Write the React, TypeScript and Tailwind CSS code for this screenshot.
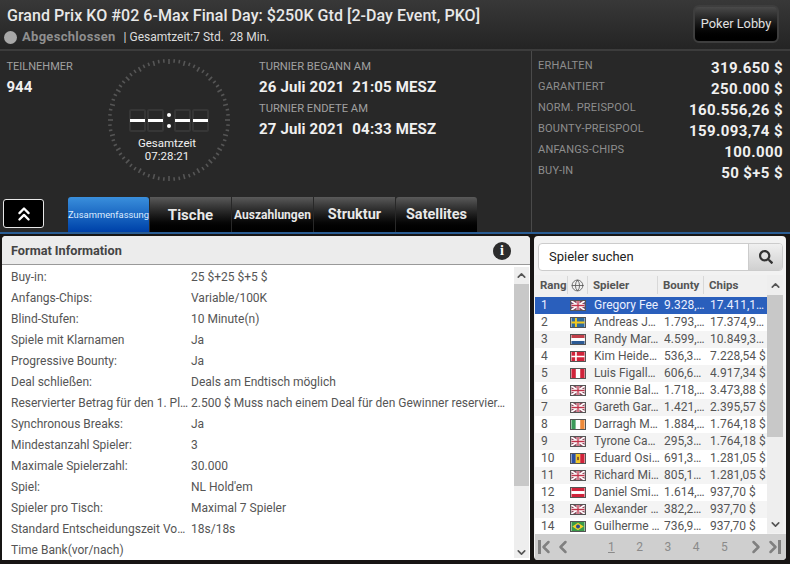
import { ChevronUp, ChevronDown, ChevronLeft, ChevronRight, ChevronsUp, Globe } from 'lucide-react';
import { FaSearch } from 'react-icons/fa';

const formatRows = [
  ['Buy-in:', '25 $+25 $+5 $'],
  ['Anfangs-Chips:', 'Variable/100K'],
  ['Blind-Stufen:', '10 Minute(n)'],
  ['Spiele mit Klarnamen', 'Ja'],
  ['Progressive Bounty:', 'Ja'],
  ['Deal schließen:', 'Deals am Endtisch möglich'],
  ['Reservierter Betrag für den 1. Pl…', '2.500 $ Muss nach einem Deal für den Gewinner reservier…'],
  ['Synchronous Breaks:', 'Ja'],
  ['Mindestanzahl Spieler:', '3'],
  ['Maximale Spielerzahl:', '30.000'],
  ['Spiel:', "NL Hold'em"],
  ['Spieler pro Tisch:', 'Maximal 7 Spieler'],
  ['Standard Entscheidungszeit Vo…', '18s/18s'],
  ['Time Bank(vor/nach)', ''],
];

const players = [
  ['1', 'uk', 'Gregory Fee', '9.328,…', '17.411,1…'],
  ['2', 'se', 'Andreas J…', '1.793,…', '17.374,9…'],
  ['3', 'nl', 'Randy Mar…', '4.599,…', '10.849,3…'],
  ['4', 'dk', 'Kim Heide…', '536,3…', '7.228,54 $'],
  ['5', 'pe', 'Luis Figall…', '606,6…', '4.917,34 $'],
  ['6', 'uk', 'Ronnie Bal…', '1.718,…', '3.473,88 $'],
  ['7', 'uk', 'Gareth Gar…', '1.421,…', '2.395,57 $'],
  ['8', 'ie', 'Darragh M…', '1.884,…', '1.764,18 $'],
  ['9', 'uk', 'Tyrone Ca…', '295,3…', '1.764,18 $'],
  ['10', 'md', 'Eduard Osi…', '691,3…', '1.281,05 $'],
  ['11', 'uk', 'Richard Mi…', '805,1…', '1.281,05 $'],
  ['12', 'at', 'Daniel Smi…', '1.614,…', '937,70 $'],
  ['13', 'uk', 'Alexander …', '382,2…', '937,70 $'],
  ['14', 'br', 'Guilherme …', '736,9…', '937,70 $'],
];

const prizes = [
  ['ERHALTEN', '319.650 $'],
  ['GARANTIERT', '250.000 $'],
  ['NORM. PREISPOOL', '160.556,26 $'],
  ['BOUNTY-PREISPOOL', '159.093,74 $'],
  ['ANFANGS-CHIPS', '100.000'],
  ['BUY-IN', '50 $+5 $'],
];

function Flag({ code }: { code: string }) {
  return (
    <svg width="16" height="11" viewBox="0 0 16 11" className="block border border-[#555]">
      {code === 'uk' && (
        <>
          <rect width="16" height="11" fill="#8a4a5c" />
          <path d="M0 0L16 11M16 0L0 11" stroke="#fff" strokeWidth="2" />
          <path d="M8 0V11M0 5.5H16" stroke="#fff" strokeWidth="3.4" />
          <path d="M8 0V11M0 5.5H16" stroke="#c0324a" strokeWidth="1.6" />
        </>
      )}
      {code === 'se' && (
        <>
          <rect width="16" height="11" fill="#2f6a9c" />
          <path d="M5.5 0V11M0 5.5H16" stroke="#f2c81e" strokeWidth="2.4" />
        </>
      )}
      {code === 'nl' && (
        <>
          <rect width="16" height="4" fill="#c2404a" />
          <rect y="3.7" width="16" height="3.6" fill="#fff" />
          <rect y="7.3" width="16" height="3.7" fill="#2c5a94" />
        </>
      )}
      {code === 'dk' && (
        <>
          <rect width="16" height="11" fill="#d0233a" />
          <path d="M5.5 0V11M0 5.5H16" stroke="#fff" strokeWidth="2" />
        </>
      )}
      {code === 'pe' && (
        <>
          <rect width="16" height="11" fill="#d0233a" />
          <rect x="5.3" width="5.4" height="11" fill="#fff" />
        </>
      )}
      {code === 'ie' && (
        <>
          <rect width="5.3" height="11" fill="#3a9a5a" />
          <rect x="5.3" width="5.4" height="11" fill="#fff" />
          <rect x="10.7" width="5.3" height="11" fill="#ee8a3a" />
        </>
      )}
      {code === 'md' && (
        <>
          <rect width="5.3" height="11" fill="#2c4fa0" />
          <rect x="5.3" width="5.4" height="11" fill="#f0c828" />
          <rect x="10.7" width="5.3" height="11" fill="#d0233a" />
          <rect x="6.8" y="3.5" width="2.4" height="4" fill="#8a5a2a" />
        </>
      )}
      {code === 'at' && (
        <>
          <rect width="16" height="11" fill="#d0233a" />
          <rect y="3.7" width="16" height="3.6" fill="#fff" />
        </>
      )}
      {code === 'br' && (
        <>
          <rect width="16" height="11" fill="#3a9a4a" />
          <path d="M8 1L15 5.5L8 10L1 5.5Z" fill="#f2d228" />
          <circle cx="8" cy="5.5" r="2.4" fill="#2c4a90" />
        </>
      )}
    </svg>
  );
}

function Clock() {
  const ticks = Array.from({ length: 72 }, (_, i) => i * 5);
  const bars = [23, 41, 68, 86];
  return (
    <svg width="124" height="124" viewBox="0 0 124 124" className="block">
      {ticks.map((a) => (
        <rect key={a} x="61.2" y="1" width="1.6" height={a % 15 === 0 ? 5 : 3.5} fill="#565656" transform={`rotate(${a} 62 62)`} />
      ))}
      {bars.map((x) => (
        <g key={x}>
          <rect x={x} y="52" width="15" height="21" rx="1" fill="none" stroke="#363636" strokeWidth="2" />
          <rect x={x} y="61" width="15" height="3" fill="#fff" />
        </g>
      ))}
      <circle cx="62" cy="57" r="2" fill="#fff" />
      <circle cx="62" cy="68" r="2" fill="#fff" />
    </svg>
  );
}

export default function App() {
  return (
    <div className="w-[790px] h-[564px] overflow-hidden bg-[#171514] text-[12px]" style={{ fontFamily: 'Roboto, sans-serif' }}>
      {/* HEADER */}
      <div className="h-[51px] flex justify-between bg-gradient-to-b from-[#383838] to-[#242424] border-b-2 border-[#3c3c3c]">
        <div className="pl-[7px] pt-[5px]">
          <h1 className="text-[16px] leading-[21px] font-medium tracking-[0.05px] text-[#e8e8e8] whitespace-nowrap">
            Grand Prix KO #02 6-Max Final Day: $250K Gtd [2-Day Event, PKO]
          </h1>
          <div className="flex items-center mt-[2px] h-[18px] text-[12px] text-[#dcdcdc] whitespace-nowrap">
            <span className="w-[13px] h-[13px] -ml-[3px] rounded-full bg-[#a8a8a8]" />
            <span className="ml-[5px] text-[13px] font-bold text-[#8f8f8f] tracking-[0.3px]">Abgeschlossen</span>
            <span className="ml-[8px]">| Gesamtzeit:7 Std.&nbsp; 28 Min.</span>
          </div>
        </div>
        <button className="mt-[5px] mr-[11px] w-[86px] h-[38px] rounded-[6px] border-2 border-[#3e3e3e] bg-gradient-to-b from-[#4a4a4a] to-[#000] text-[12.8px] text-[#e0e0e0] pb-[1px]">
          Poker Lobby
        </button>
      </div>

      {/* STATS */}
      <div className="h-[183px] flex bg-[#282828] border-b-2 border-[#2a5d94]">
        <div className="w-[532px] relative border-r border-[#4a4a4a] shrink-0 flex flex-col">
          <div className="flex flex-1">
            <div className="w-[106px] pl-[6.5px] pt-[8px]">
              <div className="text-[11px] text-[#a0a0a0] leading-[16px]">TEILNEHMER</div>
              <div className="mt-[2px] text-[15px] leading-[20px] font-bold text-[#f0f0f0]">944</div>
            </div>
            <div className="w-[153px] relative">
              <div className="pt-[7px] pl-[1px]">
                <Clock />
              </div>
              <div className="absolute left-[0px] top-[86px] w-[122px] text-center text-[11.5px] text-[#f0f0f0] leading-[13px]">
                <div>Gesamtzeit</div>
                <div>07:28:21</div>
              </div>
            </div>
            <div className="pt-[8px] whitespace-nowrap">
              <div className="text-[11.2px] text-[#a0a0a0] leading-[16px]">TURNIER BEGANN AM</div>
              <div className="mt-[2px] text-[15px] leading-[20px] font-bold tracking-[0.15px] text-[#f0f0f0]">26 Juli 2021&nbsp; 21:05 MESZ</div>
              <div className="mt-[4px] text-[11.2px] text-[#a0a0a0] leading-[16px]">TURNIER ENDETE AM</div>
              <div className="mt-[2px] text-[15px] leading-[20px] font-bold tracking-[0.15px] text-[#f0f0f0]">27 Juli 2021&nbsp; 04:33 MESZ</div>
            </div>
          </div>
          <div className="h-[36px] flex items-end shrink-0">
            <button className="ml-[3px] mb-[4px] w-[41px] h-[29px] rounded-[3px] border border-[#e8e8e8] bg-black flex items-center justify-center text-white">
              <ChevronsUp size={22} strokeWidth={2.5} />
            </button>
            <div className="ml-[24px] flex h-[35px] items-stretch gap-px">
              <div className="w-[81px] pt-[1px] rounded-t-[3px] bg-gradient-to-b from-[#3a8fdc] to-[#0040a8] text-[9.4px] text-[#dcecff] flex items-center justify-center whitespace-nowrap">Zusammenfassung</div>
              <div className="w-[81px] pt-[1px] bg-gradient-to-b from-[#5a5a5a] to-black text-[15px] font-bold text-[#e8e8e8] flex items-center justify-center">Tische</div>
              <div className="w-[81px] pt-[1px] bg-gradient-to-b from-[#5a5a5a] to-black text-[12px] font-bold text-[#e8e8e8] flex items-center justify-center">Auszahlungen</div>
              <div className="w-[81px] pt-[1px] bg-gradient-to-b from-[#5a5a5a] to-black text-[14.5px] font-bold text-[#e8e8e8] flex items-center justify-center">Struktur</div>
              <div className="w-[81px] pt-[1px] rounded-t-[3px] bg-gradient-to-b from-[#5a5a5a] to-black text-[14.5px] font-bold text-[#e8e8e8] flex items-center justify-center">Satellites</div>
            </div>
          </div>
        </div>
        <div className="flex-1 pl-[6px] pr-[7px] pt-[5px]">
          {prizes.map(([label, value]) => (
            <div key={label} className="h-[21px] flex justify-between">
              <span className="text-[11px] leading-[20px] text-[#8e8e8e] tracking-[0.2px]">{label}</span>
              <span className="text-[15px] leading-[24px] font-bold text-[#f0f0f0] tracking-[0.4px]">{value}</span>
            </div>
          ))}
        </div>
      </div>

      {/* BOTTOM PANELS */}
      <div className="flex gap-[4px] pl-[2px] pt-[2px]">
        {/* FORMAT */}
        <div className="w-[528px] h-[324px] bg-white rounded-t-[4px] flex flex-col overflow-hidden">
          <div className="h-[29px] pt-[1px] shrink-0 flex items-center justify-between pl-[9px] pr-[19px] bg-[#ececec] border-b border-[#999]">
            <span className="text-[12.7px] font-bold text-[#444]">Format Information</span>
            <span className="w-[18px] h-[18px] rounded-full bg-[#2c2c2c] text-white font-bold text-[14px] leading-[18px] text-center" style={{ fontFamily: 'Liberation Serif, serif' }}>i</span>
          </div>
          <div className="flex flex-1 min-h-0">
            <div className="flex-1 pt-[2px]">
              {formatRows.map(([label, value]) => (
                <div key={label} className="h-[21px] flex text-[#555] leading-[21px] whitespace-nowrap">
                  <span className="w-[189px] pl-[9px] shrink-0">{label}</span>
                  <span>{value}</span>
                </div>
              ))}
            </div>
            <div className="w-[15px] mr-[1px] mt-[2px] mb-[2px] flex flex-col bg-[#eeeeee]">
              <div className="h-[17px] flex items-center justify-center text-[#555]"><ChevronUp size={13} strokeWidth={3} /></div>
              <div className="h-[202px] bg-[#c8c8c8]" />
              <div className="flex-1" />
              <div className="h-[11px] flex items-center justify-center text-[#555]"><ChevronDown size={13} strokeWidth={3} /></div>
            </div>
          </div>
        </div>

        {/* PLAYERS */}
        <div className="w-[252px] h-[324px] bg-[#f2f2f2] rounded-[4px] flex flex-col overflow-hidden">
          <div className="pt-[7px] pl-[4px] pr-[3px] pb-[4px]">
            <div className="h-[28px] flex rounded-[4px] border border-[#ccc] bg-white overflow-hidden">
              <div className="flex-1 pl-[10px] text-[13px] leading-[26px] text-[#222]">Spieler suchen</div>
              <div className="w-[34px] bg-gradient-to-b from-[#f0f0f0] to-[#d0d0d0] border-l border-[#ccc] flex items-center justify-center text-[#333]">
                <FaSearch size={14} />
              </div>
            </div>
          </div>
          <div className="flex flex-1 min-h-0 pl-[1px]">
            <div className="w-[232px]">
              <div className="h-[22px] flex items-start pt-[1px] bg-[#f0f0f0] font-bold text-[#555] text-[11.5px]">
                <span className="w-[33px] pl-[5px] border-r border-[#d8d8d8] leading-[18px]">Rang</span>
                <span className="w-[20px] border-r border-[#d8d8d8] flex justify-center leading-[18px] h-[18px] items-center"><Globe size={13} strokeWidth={1.5} /></span>
                <span className="w-[70px] pl-[5px] border-r border-[#d8d8d8] leading-[18px]">Spieler</span>
                <span className="w-[46px] pl-[5px] border-r border-[#d8d8d8] leading-[18px]">Bounty</span>
                <span className="pl-[5px] leading-[18px]">Chips</span>
              </div>
              {players.map(([rank, flag, name, bounty, chips], i) => (
                <div
                  key={rank}
                  className={`h-[17px] flex items-center whitespace-nowrap leading-[17px] ${i === 0 ? 'bg-[#2a5fbc] text-[#eaf0ff]' : i % 2 === 1 ? 'bg-white text-[#555]' : 'bg-[#f4f4f4] text-[#555]'}`}
                >
                  <span className="w-[33px] pl-[6px] shrink-0">{rank}</span>
                  <span className="w-[26px] pl-[2px] shrink-0"><Flag code={flag} /></span>
                  <span className="w-[70px] shrink-0 overflow-hidden">{name}</span>
                  <span className="w-[46px] shrink-0 overflow-hidden">{bounty}</span>
                  <span className="overflow-hidden">{chips}</span>
                </div>
              ))}
            </div>
            <div className="w-[16px] h-[258px] flex flex-col bg-[#eeeeee]">
              <div className="h-[20px] flex items-center justify-center text-[#555]"><ChevronUp size={13} strokeWidth={3} /></div>
              <div className="h-[142px] bg-[#c8c8c8]" />
              <div className="flex-1" />
              <div className="h-[18px] flex items-center justify-center text-[#555]"><ChevronDown size={13} strokeWidth={3} /></div>
            </div>
          </div>
          <div className="h-[26px] ml-[1px] shrink-0 bg-[#cfcfcf] flex items-center text-[#808080] relative">
            <span className="ml-[3px] flex items-center"><span className="w-[3px] h-[14px] bg-[#808080] mr-[-5px]" /><ChevronLeft size={20} strokeWidth={3} /></span>
            <span className="ml-[-3px]"><ChevronLeft size={20} strokeWidth={3} /></span>
            <div className="ml-[35px] flex gap-[21.5px] text-[#8a8a8a]">
              <span className="underline">1</span>
              <span>2</span>
              <span>3</span>
              <span>4</span>
              <span>5</span>
            </div>
            <span className="ml-auto"><ChevronRight size={20} strokeWidth={3} /></span>
            <span className="ml-[-3px] mr-[5px] flex items-center"><ChevronRight size={20} strokeWidth={3} /><span className="w-[3px] h-[14px] bg-[#808080] ml-[-5px]" /></span>
          </div>
        </div>
      </div>
    </div>
  );
}
